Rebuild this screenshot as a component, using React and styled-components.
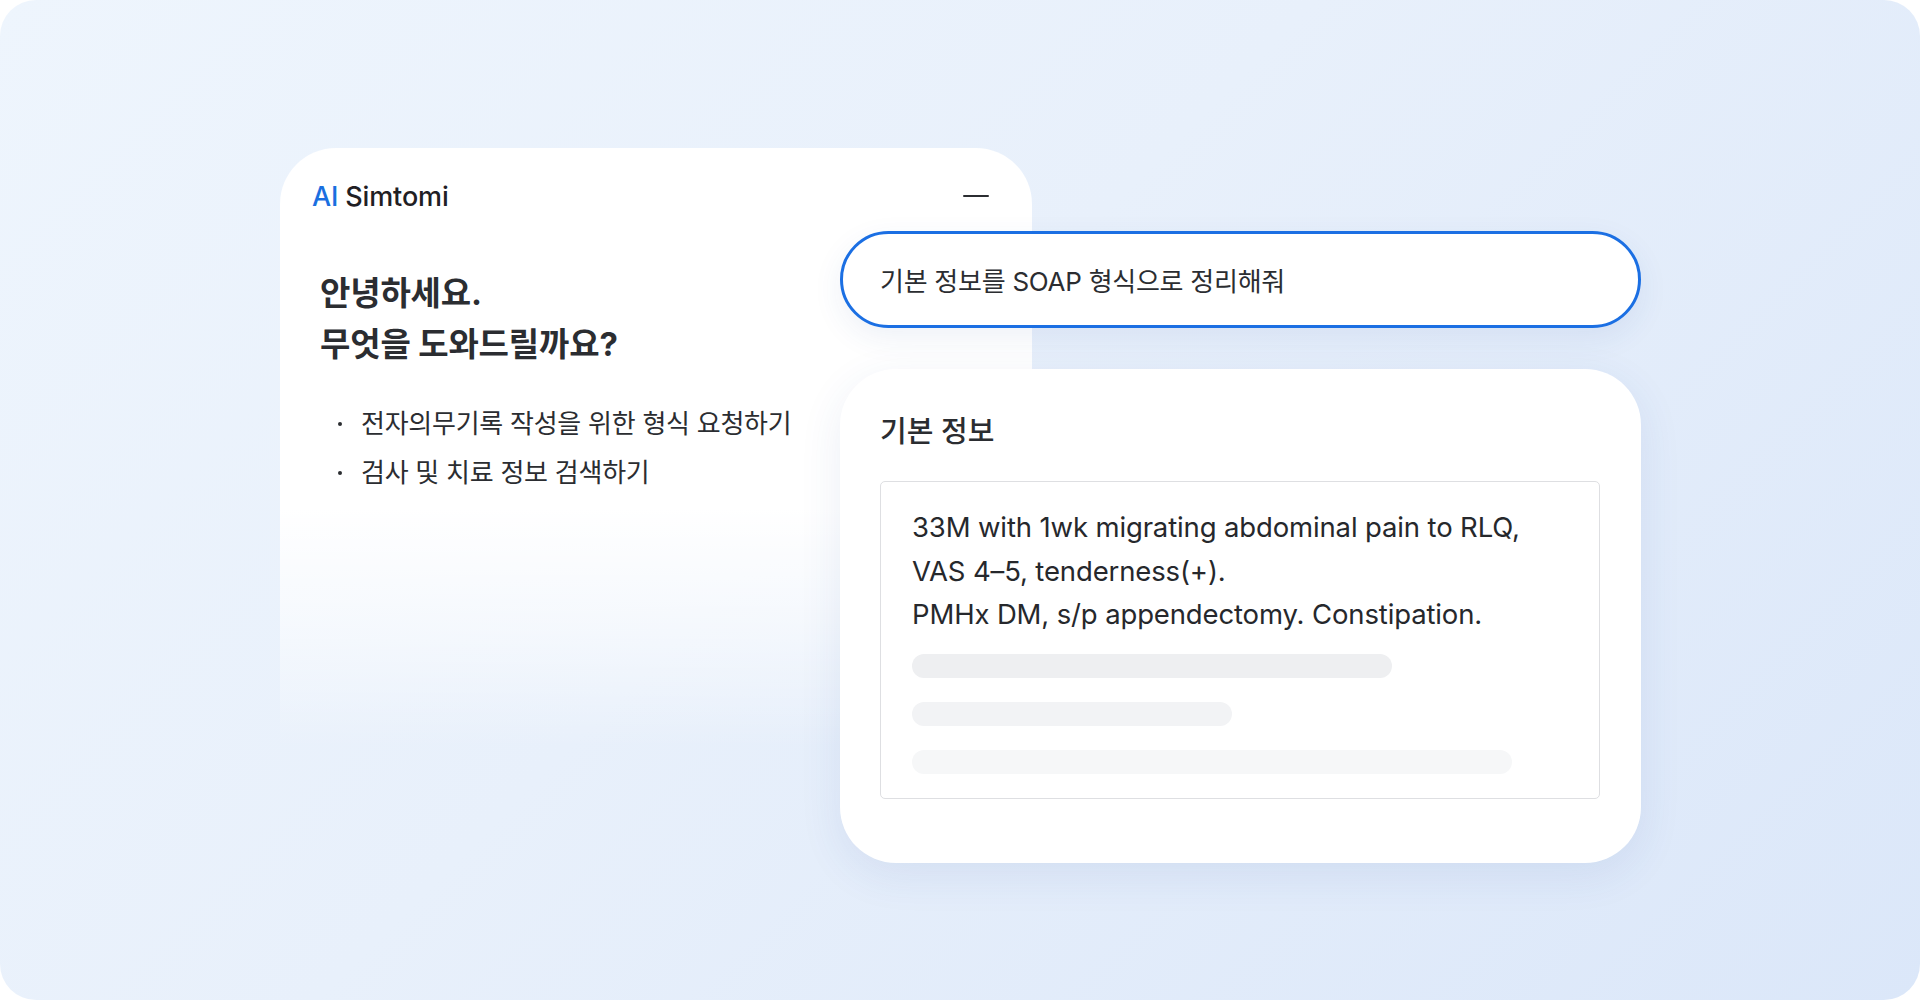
import styled, { createGlobalStyle } from 'styled-components';

const GlobalStyle = createGlobalStyle`
  html, body {
    margin: 0;
    padding: 0;
    background: #ffffff;
  }
  * {
    box-sizing: border-box;
  }
  body {
    font-family: Inter, "Noto Sans CJK KR", "Noto Sans", sans-serif;
    color: #2b2d31;
  }
`;

const Frame = styled.div`
  width: 1920px;
  height: 1000px;
  border-radius: 36px;
  overflow: hidden;
  background: linear-gradient(135deg, #eef5fd 0%, #e8f0fb 45%, #dbe7f9 100%);
  display: flex;
  align-items: flex-start;
  padding: 148px 0 0 280px;
`;

/* Left chat window, fades out toward the bottom */
const ChatWindow = styled.section`
  width: 752px;
  height: 600px;
  flex-shrink: 0;
  border-radius: 56px 56px 0 0;
  background: linear-gradient(
    180deg,
    #ffffff 0%,
    #ffffff 60%,
    rgba(255, 255, 255, 0.55) 80%,
    rgba(255, 255, 255, 0) 100%
  );
  padding: 32px 43px 0 32px;
`;

const Header = styled.header`
  display: flex;
  align-items: center;
  justify-content: space-between;
  height: 32px;
`;

const Brand = styled.div`
  font-size: 27px;
  font-weight: 500;
  letter-spacing: -0.005em;
  color: #1f2024;

  span {
    color: #1a6fe0;
  }
`;

const MinimizeIcon = styled.div`
  width: 26px;
  height: 2px;
  background: #2b2d31;
  border-radius: 1px;
`;

const Greeting = styled.h1`
  margin: 56px 0 0 8px;
  font-size: 33px;
  line-height: 51px;
  font-weight: 700;
  letter-spacing: -0.005em;
  color: #2b2d31;
`;

const Suggestions = styled.ul`
  list-style: none;
  margin: 29px 0 0 8px;
  padding: 0;
`;

const Suggestion = styled.li`
  display: flex;
  align-items: center;
  gap: 19px;
  font-size: 26px;
  line-height: 49px;
  letter-spacing: -0.01em;
  color: #2b2d31;
  padding-left: 18px;

  &::before {
    content: '';
    width: 4px;
    height: 4px;
    border-radius: 50%;
    background: #2b2d31;
  }
`;

const RightColumn = styled.div`
  width: 801px;
  margin: 83px 0 0 -192px;
  display: flex;
  flex-direction: column;
  gap: 41px;
  position: relative;
`;

const Prompt = styled.div`
  height: 97px;
  border-radius: 999px;
  background: #ffffff;
  border: 3px solid #1b6fe3;
  box-shadow: 0 10px 30px rgba(40, 80, 150, 0.08);
  display: flex;
  align-items: center;
  padding-left: 37px;
  font-size: 26px;
  letter-spacing: -0.01em;
  color: #2b2d31;
`;

const ResultCard = styled.div`
  height: 494px;
  border-radius: 56px;
  background: #ffffff;
  box-shadow: 0 12px 44px rgba(40, 80, 150, 0.09);
  padding: 45px 41px 0 40px;
`;

const ResultTitle = styled.h2`
  margin: 0;
  font-size: 29px;
  line-height: 36px;
  font-weight: 500;
  letter-spacing: 0;
  color: #2b2d31;
`;

const NoteBox = styled.div`
  margin-top: 31px;
  height: 318px;
  border: 1.5px solid #dedfe2;
  border-radius: 5px;
  padding: 24px 32px 26px 31px;
`;

const NoteText = styled.p`
  margin: 0;
  font-size: 27.5px;
  line-height: 43.5px;
  letter-spacing: -0.005em;
  color: #26282c;
`;

const Skeletons = styled.div`
  margin-top: 17px;
  display: flex;
  flex-direction: column;
  gap: 24px;
`;

const SkeletonBar = styled.div`
  height: 24px;
  border-radius: 12px;
  width: ${({ $w }) => $w}px;
  background: ${({ $tone }) => $tone};
`;

const bars = [
  { w: 480, tone: '#eeeff1' },
  { w: 320, tone: '#f2f3f5' },
  { w: 600, tone: '#f6f7f8' },
];

export default function App() {
  return (
    <>
      <GlobalStyle />
      <Frame>
        <ChatWindow>
          <Header>
            <Brand>
              <span>AI</span> Simtomi
            </Brand>
            <MinimizeIcon />
          </Header>
          <Greeting>
            안녕하세요.
            <br />
            무엇을 도와드릴까요?
          </Greeting>
          <Suggestions>
            <Suggestion>전자의무기록 작성을 위한 형식 요청하기</Suggestion>
            <Suggestion>검사 및 치료 정보 검색하기</Suggestion>
          </Suggestions>
        </ChatWindow>
        <RightColumn>
          <Prompt>기본 정보를 SOAP 형식으로 정리해줘</Prompt>
          <ResultCard>
            <ResultTitle>기본 정보</ResultTitle>
            <NoteBox>
              <NoteText>
                33M with 1wk migrating abdominal pain to RLQ,
                <br />
                VAS 4–5, tenderness(+).
                <br />
                PMHx DM, s/p appendectomy. Constipation.
              </NoteText>
              <Skeletons>
                {bars.map((b, i) => (
                  <SkeletonBar key={i} $w={b.w} $tone={b.tone} />
                ))}
              </Skeletons>
            </NoteBox>
          </ResultCard>
        </RightColumn>
      </Frame>
    </>
  );
}
